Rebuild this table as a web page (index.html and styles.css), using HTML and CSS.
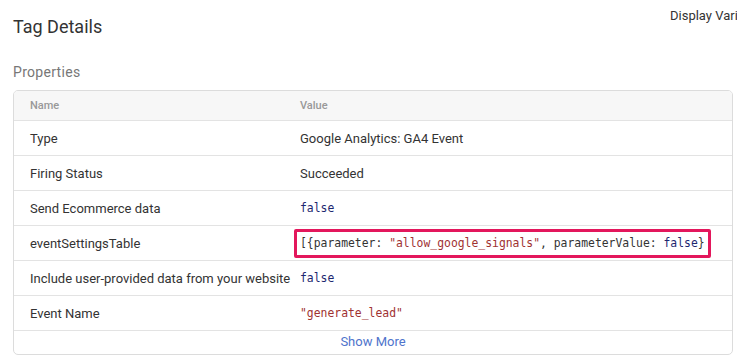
FILE: index.html
```html
<!DOCTYPE html>
<html>
<head>
<meta charset="utf-8">
<link rel="stylesheet" href="styles.css">
</head>
<body>
<div class="page">
  <div class="top">
    <h1 class="title">Tag Details</h1>
    <div class="display">Display Vari</div>
  </div>
  <h2 class="section">Properties</h2>
  <div class="card">
    <div class="row head"><div>Name</div><div>Value</div></div>
    <div class="row"><div>Type</div><div>Google Analytics: GA4 Event</div></div>
    <div class="row"><div>Firing Status</div><div>Succeeded</div></div>
    <div class="row"><div>Send Ecommerce data</div><div class="mono"><span class="bool">false</span></div></div>
    <div class="row"><div>eventSettingsTable</div><div class="mono"><span class="hl">[{parameter: <span class="str">"allow_google_signals"</span>, parameterValue: <span class="bool">false</span>}</span></div></div>
    <div class="row"><div>Include user-provided data from your website</div><div class="mono"><span class="bool">false</span></div></div>
    <div class="row"><div>Event Name</div><div class="mono"><span class="str">"generate_lead"</span></div></div>
    <div class="more">Show More</div>
  </div>
</div>
</body>
</html>
```
FILE: styles.css
```css
html, body {
  margin: 0;
  padding: 0;
  background: #fff;
  overflow: hidden;
}
body {
  font-family: Roboto, "Noto Sans", sans-serif;
  color: #333;
  width: 737px;
  height: 361px;
}
.page {
  padding: 0 0 0 13px;
}
.top {
  display: flex;
  justify-content: space-between;
  align-items: flex-start;
  height: 46px;
}
.title {
  margin: 16px 0 0 0;
  font-size: 18px;
  font-weight: 400;
  line-height: 22px;
  color: #333;
}
.display {
  width: 67px;
  white-space: nowrap;
  margin-top: 8px;
  font-size: 13px;
  line-height: 16px;
  color: #333;
}
.section {
  margin: 17px 0 0 0;
  font-size: 14px;
  font-weight: 400;
  line-height: 18px;
  color: #777;
  letter-spacing: 0.3px;
}
.card {
  margin-top: 9px;
  width: 720px;
  box-sizing: border-box;
  border: 1px solid #dcdcdc;
  border-radius: 5px;
  overflow: hidden;
}
.row {
  display: grid;
  grid-template-columns: 270px 1fr;
  align-items: center;
  height: 35px;
  padding-left: 16px;
  border-top: 1px solid #e3e3e3;
  box-sizing: border-box;
  font-size: 13px;
  color: #333;
  white-space: nowrap;
}
.row.head {
  border-top: none;
  height: 29px;
  background: #f7f7f7;
  font-size: 11px;
  font-weight: 500;
  color: #999;
}
.mono {
  font-family: "DejaVu Sans Mono", "Liberation Mono", monospace;
  font-size: 11.4px;
  color: #333;
}
.bool { color: #1d2770; }
.str { color: #a03232; }
.hl {
  display: inline-block;
  margin-left: -6px;
  padding: 4px 3px 4px 3px;
  border: 3px solid #e3175c;
  border-radius: 2px;
  line-height: 15px;
}
.more {
  border-top: 1px solid #e3e3e3;
  height: 23px;
  line-height: 22px;
  text-align: center;
  font-size: 13px;
  color: #4f74cc;
}
```
